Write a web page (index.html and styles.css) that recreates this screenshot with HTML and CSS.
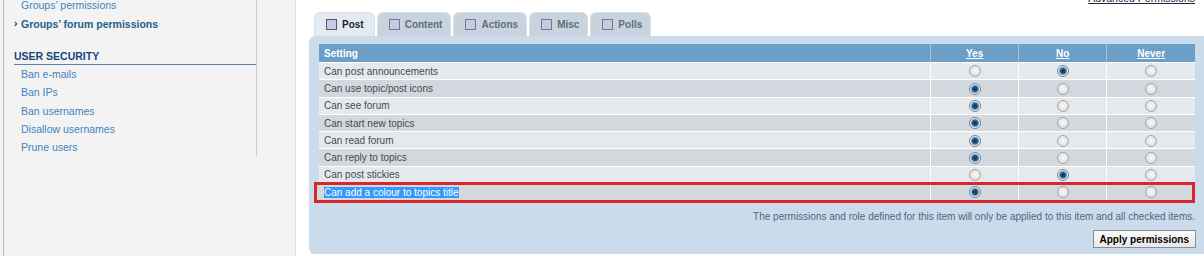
FILE: index.html
```html
<!DOCTYPE html>
<html lang="en">
<head>
    <meta charset="UTF-8">
    <title>Groups' forum permissions</title>
    <link rel="stylesheet" href="styles.css">
</head>
<body>
<div class="page">
    <!-- Left menu -->
    <div class="side">
        <div class="menu">
            <ul class="links">
                <li><a href="#">Groups’ permissions</a></li>
                <li class="active"><a href="#">Groups’ forum permissions</a></li>
            </ul>
            <h3>USER SECURITY</h3>
            <ul class="links">
                <li><a href="#">Ban e-mails</a></li>
                <li><a href="#">Ban IPs</a></li>
                <li><a href="#">Ban usernames</a></li>
                <li><a href="#">Disallow usernames</a></li>
                <li><a href="#">Prune users</a></li>
            </ul>
        </div>
    </div>

    <!-- Main content -->
    <div class="main">
        <div class="toplink"><a href="#">Advanced Permissions</a></div>

        <ul class="tabs">
            <li class="tab current"><span class="box"></span>Post</li>
            <li class="tab"><span class="box"></span>Content</li>
            <li class="tab"><span class="box"></span>Actions</li>
            <li class="tab"><span class="box"></span>Misc</li>
            <li class="tab"><span class="box"></span>Polls</li>
        </ul>

        <div class="panel">
            <div class="tablewrap">
                <table class="perms">
                    <tr>
                        <th class="name">Setting</th>
                        <th><a href="#">Yes</a></th>
                        <th><a href="#">No</a></th>
                        <th><a href="#">Never</a></th>
                    </tr>
                    <tr class="row1"><td class="name">Can post announcements</td><td><span class="radio"></span></td><td><span class="radio on"></span></td><td><span class="radio"></span></td></tr>
                    <tr class="row2"><td class="name">Can use topic/post icons</td><td><span class="radio on"></span></td><td><span class="radio"></span></td><td><span class="radio"></span></td></tr>
                    <tr class="row1"><td class="name">Can see forum</td><td><span class="radio on"></span></td><td><span class="radio"></span></td><td><span class="radio"></span></td></tr>
                    <tr class="row2"><td class="name">Can start new topics</td><td><span class="radio on"></span></td><td><span class="radio"></span></td><td><span class="radio"></span></td></tr>
                    <tr class="row1"><td class="name">Can read forum</td><td><span class="radio on"></span></td><td><span class="radio"></span></td><td><span class="radio"></span></td></tr>
                    <tr class="row2"><td class="name">Can reply to topics</td><td><span class="radio on"></span></td><td><span class="radio"></span></td><td><span class="radio"></span></td></tr>
                    <tr class="row1"><td class="name">Can post stickies</td><td><span class="radio"></span></td><td><span class="radio on"></span></td><td><span class="radio"></span></td></tr>
                    <tr class="row2"><td class="name"><span class="sel">Can add a colour to topics title</span></td><td><span class="radio on"></span></td><td><span class="radio"></span></td><td><span class="radio"></span></td></tr>
                </table>
                <div class="mark"></div>
            </div>
            <p class="note">The permissions and role defined for this item will only be applied to this item and all checked items.</p>
            <div class="actions"><button class="btn">Apply permissions</button></div>
        </div>
    </div>
</div>
</body>
</html>
```

FILE: styles.css
```css
html, body { margin: 0; padding: 0; height: 256px; overflow: hidden; }
body { font-family: "Liberation Sans", Arial, sans-serif; font-size: 10px; color: #333; background: #f3f3f3; }
a { color: inherit; }

.page { display: flex; margin-left: 3px; border-left: 1px solid #b4b4b4; height: 256px; }

/* sidebar */
.side { width: 291px; flex: none; border-right: 1px solid #dcdcdc; }
.menu { width: 252px; margin-top: -4px; border-right: 1px solid #cfcfcf; }
.links { list-style: none; margin: 0; padding: 0; }
.links li { height: 18.5px; line-height: 18.5px; padding-left: 17px; font-size: 10.5px; position: relative; }
.links a { color: #4284bd; text-decoration: none; }
.links li.active a { color: #1d5f8a; font-weight: bold; }
.links li.active::before { content: "›"; position: absolute; left: 10px; top: -1px; color: #333; font-weight: bold; }
.menu h3 { margin: 16px 0 0 10px; padding: 0 0 1px; height: 14px; line-height: 14px; font-size: 10.5px; color: #18457c; border-bottom: 1px solid #5f7f9e; }
.menu h3 + .links li { height: 18.3px; line-height: 18.3px; }

/* main */
.main { flex: 1; background: #fff; padding-left: 13px; overflow: hidden; }
.toplink { height: 12px; margin-top: -8px; text-align: right; padding-right: 9px; font-size: 10.5px; line-height: 12px; }
.toplink a { color: #1a2a3a; }

.tabs { list-style: none; margin: 8px 0 0 5px; padding: 0; display: flex; gap: 2px; height: 24px; }
.tab { display: flex; align-items: center; gap: 5px; padding: 0 8px 0 11px; height: 24px; box-sizing: border-box; border-radius: 6px 6px 0 0; background: #c8d3dd; color: #5b6e82; font-weight: bold; font-size: 10px; border: 1px solid #d9e1e8; border-bottom: 0; }
.tab.current { background: #e3eaf1; color: #1d2733; padding-right: 10px; }
.box { width: 11px; height: 11px; box-sizing: border-box; border: 1px solid #56585f; background: #c9c9e6; }
.tab:not(.current) .box { border-color: #6f7a88; }

.panel { width: 905px; height: 218px; box-sizing: border-box; background: #cadceb; border-radius: 6px 0 0 6px; padding: 8px 0 0 10px; }
.tablewrap { position: relative; width: 876px; }
.perms { width: 876px; border-collapse: collapse; table-layout: fixed; }
.perms th { height: 18px; padding: 0; background: #6c9fc8; color: #fff; font-weight: bold; font-size: 10px; text-align: center; border-left: 1px solid #a7c4dc; }
.perms th a { color: #fff; }
.perms th.name { text-align: left; padding-left: 5px; border-left: 0; width: 606px; }
.perms td { height: 16.3px; padding: 0; border-top: 1px solid #fff; border-left: 1px solid #fff; text-align: center; color: #454950; }
.perms td.name { text-align: left; padding-left: 5px; border-left: 0; width: 606px; }
.perms .row1 td { background: #e6e9ec; }
.perms .row2 td { background: #d3d8de; }
.sel { background: #3399ff; color: #fff; }

.radio { display: inline-block; width: 12px; height: 12px; box-sizing: border-box; border-radius: 50%; border: 1px solid #a4a4a4; background: radial-gradient(circle at 50% 45%, #fafafa 0, #e0e0e0 70%); vertical-align: middle; }
.radio.on { border-color: #6b859c; background: radial-gradient(circle at 50% 50%, #0e3558 0, #1d4f7c 2.2px, #5a86ab 3.4px, #e7edf2 4.4px); }

.mark { position: absolute; left: -5px; top: 138px; width: 881px; height: 21px; box-sizing: border-box; border: 3px solid #d9262b; }

.note { margin: 11px 9px 0 0; text-align: right; color: #536482; font-size: 10px; width: 876px; }
.actions { width: 876px; text-align: right; margin-top: 8px; }
.btn { font-family: "Liberation Sans", Arial, sans-serif; font-size: 10px; font-weight: bold; color: #000; height: 18px; padding: 0 6px; background: linear-gradient(#fbfbfb, #e8e8e8); border: 1px solid #8d8d8d; border-radius: 0; margin-right: -1px; }
```
